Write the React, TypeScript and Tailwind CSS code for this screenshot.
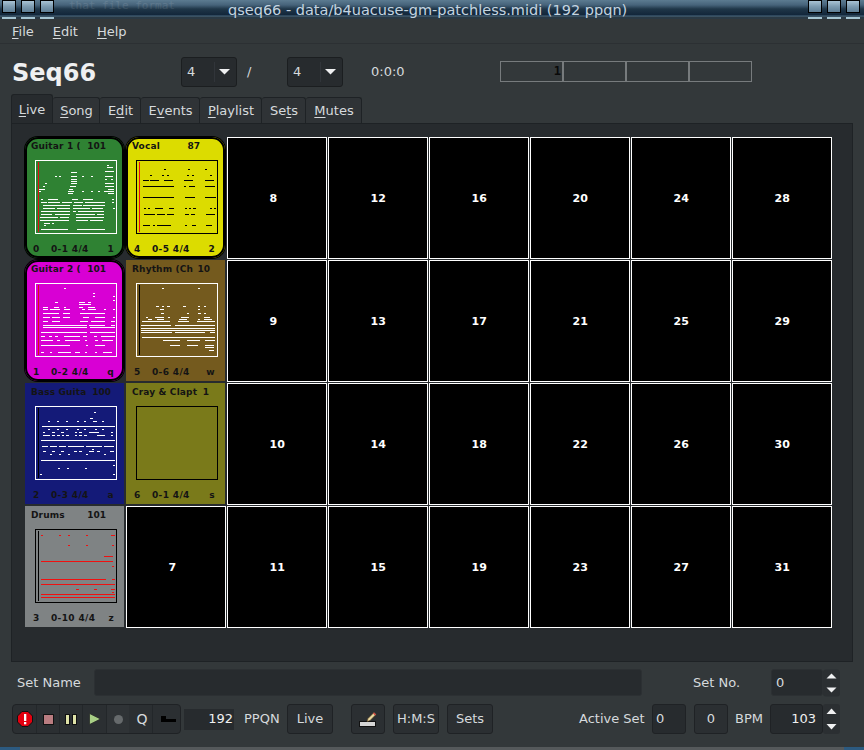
import React from "react";

const UI = "font-['DejaVu_Sans',sans-serif]";

type Row = number[];

// note rows: [y, x1, x2, x1, x2, ...] measured in 3x picture units
const guitar1: Row[] = [
  [106, 276, 282], [112, 276, 294], [124, 270, 297], [127, 169, 187], [139, 121, 127, 133, 139, 169, 187, 202, 208, 229, 235, 270, 294],
  [148, 169, 187, 270, 276, 288, 294], [154, 169, 187], [160, 90, 96, 169, 187, 270, 297], [169, 84, 90, 166, 184, 270, 297],
  [178, 72, 90, 163, 175, 280, 297], [184, 72, 78, 160, 178, 202, 208, 229, 235, 250, 256, 268, 297], [190, 160, 175, 280, 297],
  [208, 78, 84, 100, 130, 170, 190, 205, 235, 292, 298], [217, 78, 96, 100, 135, 140, 170, 178, 205, 210, 270, 292, 298],
  [226, 84, 165, 175, 200, 205, 270], [235, 84, 120, 126, 165, 175, 225, 232, 265, 295, 300], [244, 78, 165, 175, 182, 190, 268], [253, 78, 110, 120, 165, 184, 240, 246, 268],
  [262, 75, 130, 136, 162, 184, 268], [271, 75, 162, 184, 220, 226, 265], [280, 87, 105, 111, 117], [286, 87, 93], [298, 78, 160, 187, 270],
];
const vocal: Row[] = [
  [118, 447, 453, 519, 525, 570, 576], [136, 405, 411, 441, 447, 456, 462, 516, 522, 531, 537, 585, 591],
  [151, 384, 402, 405, 432, 447, 474, 507, 534, 570, 597], [169, 384, 477, 507, 513, 522, 540, 570, 600],
  [202, 384, 477, 510, 540, 570, 603], [235, 387, 393, 399, 405, 420, 444, 462, 477, 510, 516, 522, 528, 534, 543, 585, 591, 597, 603],
  [253, 387, 420, 426, 450, 456, 477, 510, 522, 528, 540, 573, 600], [286, 384, 405, 414, 420, 426, 468, 510, 516, 531, 543, 573, 591],
];
const guitar2: Row[] = [
  [475, 147, 153], [490, 234, 240], [498, 234, 240, 294, 300], [510, 294, 300], [516, 120, 129, 192, 210, 219, 228], [522, 192, 228],
  [531, 84, 99, 117, 132, 147, 153, 192, 204, 219, 240], [537, 84, 99, 105, 135, 147, 165, 201, 210, 219, 243, 267, 273, 294, 300],
  [549, 84, 132, 144, 165, 195, 270], [561, 84, 105, 111, 135, 144, 165, 204, 222, 240, 270, 294, 300],
  [573, 84, 100, 111, 135, 195, 220, 228, 270, 288, 300], [585, 84, 216, 222, 270, 288, 300], [591, 84, 216, 225, 300],
  [606, 78, 216, 225, 300], [618, 78, 90, 102, 112, 120, 130, 147, 195, 205, 215, 236, 246, 258, 300],
  [630, 78, 114, 125, 135, 150, 195, 210, 215, 240, 250, 260, 295], [645, 78, 165, 212, 218, 240, 270],
  [666, 78, 87, 105, 111, 129, 168, 180, 195, 210, 216, 240, 246, 264, 291],
];
const rhythm: Row[] = [
  [475, 441, 447, 549, 555], [528, 423, 432, 441, 447, 456, 465, 504, 513, 549, 555, 567, 573], [537, 435, 447, 549, 555],
  [549, 438, 447, 516, 522, 549, 558, 567, 573], [561, 393, 399, 420, 447, 459, 465, 498, 522, 567, 585],
  [567, 399, 411, 426, 447, 492, 516, 549, 555, 567, 591], [573, 381, 465, 489, 522, 546, 600], [585, 378, 468, 480, 600],
  [594, 378, 600], [600, 378, 600], [606, 378, 471, 480, 570, 585, 600], [621, 381, 600], [630, 444, 495, 516, 555, 570, 600],
  [645, 465, 495, 516, 550, 570, 597], [651, 570, 597], [660, 582, 597],
];
const bass: Row[] = [
  [97, 237, 243], [115, 225, 234], [124, 99, 105, 126, 132, 153, 159, 186, 192, 207, 213, 234, 246, 261, 267], [139, 81, 300],
  [148, 99, 105, 126, 132, 153, 159, 186, 192, 207, 213, 240, 246, 261, 267], [157, 84, 90, 111, 120, 138, 147, 180, 186, 192, 201, 222, 252, 288, 294],
  [166, 84, 105, 111, 120, 126, 135, 141, 147, 153, 162, 180, 186, 192, 201, 207, 216, 246, 270, 288, 294], [181, 78, 300],
  [199, 81, 99, 105, 126, 132, 153, 159, 207, 213, 261, 267, 297], [208, 231, 237],
  [214, 84, 93, 111, 120, 138, 147, 177, 186, 192, 201, 222, 237, 246, 255, 285, 297], [223, 105, 111, 132, 138, 159, 165, 213, 219, 267, 273],
  [241, 78, 300], [256, 294, 300], [265, 129, 135, 156, 162, 210, 216], [283, 75, 81, 294, 300],
];
const drums: Row[] = [
  [466, 78, 84, 132, 138, 159, 165, 213, 219, 288, 300], [496, 159, 165, 213, 219, 291, 297], [529, 267, 294], [530, 267, 294], [544, 78, 294],
  [559, 291, 297], [598, 78, 273, 291, 300], [613, 78, 300], [628, 183, 192, 237, 246, 288, 300], [637, 291, 297], [643, 78, 300], [652, 78, 300],
];

function PatternBox({ ox, oy, rows, frame, note, line }: { ox: number; oy: number; rows: Row[]; frame: string; note: string; line?: string }) {
  return (
    <svg width="82" height="74" viewBox={`${ox} ${oy} 246 222`} shapeRendering="crispEdges" className="ml-[10px] block">
      <rect x={ox + 1.5} y={oy + 1.5} width="243" height="219" fill="none" stroke={frame} strokeWidth="3" />
      {line && <rect x={ox + 9} y={oy + 6} width="3" height="210" fill={line} />}
      {rows.flatMap((r, i) => {
        const out = [];
        for (let k = 1; k < r.length; k += 2) {
          out.push(<rect key={`${i}-${k}`} x={r[k]} y={r[0] - 1} width={r[k + 1] - r[k]} height="3" fill={note} />);
        }
        return out;
      })}
    </svg>
  );
}

function PatternCell({ name, count, nameW, no, pat, hotkey, bg, armed, children }: {
  name: string; count: string; nameW: number; no: string; pat: string; hotkey: string; bg: string; armed?: boolean; children: React.ReactNode;
}) {
  return (
    <div
      className={`w-[99px] h-[121px] flex flex-col font-['DejaVu_Sans',sans-serif] font-bold text-[9px] leading-[11px] text-[#141414] ${bg} ${armed ? "rounded-[13px] shadow-[0_0_0_1px_#000,inset_0_0_0_2px_#000]" : ""}`}
    >
      <div className="h-[23px] pl-[6px] pt-[4px]">
        <div className="flex justify-between whitespace-pre" style={{ width: nameW }}>
          <span className="tracking-[0.15px]">{name}</span>
          <span>{count}</span>
        </div>
      </div>
      {children}
      <div className="flex mt-[10px] pl-[8px] pr-[10px] tracking-[0.35px]">
        <span className="w-[18px]">{no}</span>
        <span>{pat}</span>
        <span className="ml-auto">{hotkey}</span>
      </div>
    </div>
  );
}

function EmptyCell({ n }: { n: number }) {
  return (
    <div className="w-[100px] h-[122px] bg-black border border-white flex items-center justify-center pt-[2px] font-['DejaVu_Sans',sans-serif] font-bold text-[11px] text-white">
      <span className="w-[15px] whitespace-nowrap">{n}</span>
    </div>
  );
}

function Combo({ value, className }: { value: string; className: string }) {
  return (
    <div className={`w-[56px] h-[30px] bg-[#272b2e] border border-[#1b1e20] rounded-[3px] flex items-center ${className}`}>
      <span className="pl-[5px] flex-1 text-[13px]">{value}</span>
      <div className="w-[1px] h-[20px] bg-[#31353a]" />
      <svg width="21" height="8" viewBox="0 0 21 8">
        <path d="M4 1h11l-5.500 5.500z" fill="#eff0f1" />
      </svg>
    </div>
  );
}

function Btn({ children, className }: { children: React.ReactNode; className: string }) {
  return (
    <div className={`h-[30px] bg-[#2b2f32] border border-[#1f2225] rounded-[3px] flex items-center justify-center text-[13px] text-[#d6dadd] ${className}`}>
      {children}
    </div>
  );
}

// transport buttons share one rounded frame, with a hairline between them
function ToolBtn({ children, className }: { children: React.ReactNode; className: string }) {
  return (
    <div className={`h-full border-r border-[#23272a] flex items-center justify-center ${className}`}>
      {children}
    </div>
  );
}

function Arrows() {
  return (
    <div className="w-[17px] h-[30px] bg-[#2b2f32] rounded-[3px] flex flex-col items-center justify-around">
      <svg width="11" height="7" viewBox="0 0 11 7"><path d="M5.500 0.5l5 5.500h-10z" fill="#eff0f1" /></svg>
      <svg width="11" height="7" viewBox="0 0 11 7"><path d="M0.5 1h10l-5 5.500z" fill="#eff0f1" /></svg>
    </div>
  );
}

const tabs = [
  { pre: "", u: "S", post: "ong", w: "w-[47px]" },
  { pre: "E", u: "d", post: "it", w: "w-[41px]" },
  { pre: "E", u: "v", post: "ents", w: "w-[59px]" },
  { pre: "", u: "P", post: "laylist", w: "w-[62px]" },
  { pre: "Se", u: "t", post: "s", w: "w-[44px]" },
  { pre: "", u: "M", post: "utes", w: "w-[56px]" },
];

function WinButton() {
  return (
    <div className="flex flex-col gap-[4px]">
      <div className="w-[14px] h-[13px] border border-black bg-gradient-to-b from-[#a9c3d4] via-[#7d9bb0] to-[#5f7f96]" />
      <div className="w-[14px] h-[2px] bg-[#a4c4d2]" />
    </div>
  );
}

export default function App() {
  return (
    <div className={`${UI} w-[864px] h-[750px] bg-[#33383a] text-[#d6dadd] overflow-hidden flex flex-col`}>
      {/* window title */}
      <div className="relative h-[19px] shrink-0 bg-[linear-gradient(#5c7b91_0,#46637a_5px,#1f3648_9px,#12263a_15px,#4b6a80_16px,#2a3944_17px,#2a3944_19px)] overflow-hidden flex justify-between px-[2px]">
        <div className="flex gap-[5px]">
          <WinButton />
          <WinButton />
          <WinButton />
        </div>
        <span className="absolute left-[69px] top-0 font-['DejaVu_Sans_Mono',monospace] text-[11px] leading-[12px] text-white/10 whitespace-pre">that file format</span>
        <span className="absolute left-[228px] top-[1px] text-[14.5px] leading-[18px] text-[#c4d4e0] whitespace-pre">qseq66 - data/b4uacuse-gm-patchless.midi (192 ppqn)</span>
        <div className="flex gap-[5px] pr-[2px]">
          <WinButton />
          <WinButton />
          <WinButton />
        </div>
      </div>

      {/* menu */}
      <div className="h-[25px] shrink-0 border-b border-[#2c3033] flex items-center gap-[19px] pl-[12px] text-[13px] pt-[1px]">
        <span><u className="underline-offset-2">F</u>ile</span>
        <span><u className="underline-offset-2">E</u>dit</span>
        <span><u className="underline-offset-2">H</u>elp</span>
      </div>

      {/* seq66 header row */}
      <div className="h-[50px] shrink-0 flex items-center pl-[12px]">
        <span className="w-[169px] text-[24px] font-bold text-[#eff0f1] mt-[8px]">Seq66</span>
        <Combo value="4" className="mt-[6px]" />
        <span className="w-[50px] pl-[10px] text-[13px] mt-[6px]">/</span>
        <Combo value="4" className="mt-[6px]" />
        <span className="ml-[28px] w-[129px] text-[13px] mt-[6px]">0:0:0</span>
        <div className="flex mt-[4px]">
          <div className="w-[63px] h-[21px] border border-[#777b7d] flex items-center justify-end pr-[1px] font-['DejaVu_Sans_Mono',monospace] font-bold text-[12px] text-[#0a0a0a]">1</div>
          <div className="w-[63px] h-[21px] border border-[#777b7d]" />
          <div className="w-[63px] h-[21px] border border-[#777b7d]" />
          <div className="w-[63px] h-[21px] border border-[#777b7d]" />
        </div>
      </div>

      {/* tabs */}
      <div className="h-[29px] shrink-0 pl-[11px] flex items-end text-[13px]">
        <div className="w-[42px] h-[29px] bg-[#272b2e] border border-b-0 border-[#1e2225] rounded-t-[3px] flex items-center justify-center pt-[1px]">
          <span><u className="underline-offset-2">L</u>ive</span>
        </div>
        {tabs.map((t) => (
          <div key={t.post} className={`${t.w} h-[26px] bg-[#2f3336] border border-b-0 border-l-0 border-[#1e2225] rounded-t-[3px] flex items-center justify-center pl-[1px]`}>
            <span>{t.pre}<u className="underline-offset-2">{t.u}</u>{t.post}</span>
          </div>
        ))}
      </div>

      {/* live grid panel */}
      <div className="mx-[11px] h-[539px] shrink-0 bg-[#272b2e] border border-[#1e2225] pl-[13px] pt-[13px]">
        <div className="grid grid-cols-[repeat(8,101px)] auto-rows-[123px]">
          <PatternCell name="Guitar 1 (" count="101" nameW={75} no="0" pat="0-1 4/4" hotkey="1" bg="bg-[#2f8233]" armed>
            <PatternBox ox={60} oy={90} rows={guitar1} frame="#fff" note="#fff" line="#e01010" />
          </PatternCell>
          <PatternCell name="Vocal" count="87" nameW={68} no="4" pat="0-5 4/4" hotkey="2" bg="bg-[#dcdc00]" armed>
            <PatternBox ox={363} oy={90} rows={vocal} frame="#000" note="#000" line="#f01010" />
          </PatternCell>
          <EmptyCell n={8} />
          <EmptyCell n={12} />
          <EmptyCell n={16} />
          <EmptyCell n={20} />
          <EmptyCell n={24} />
          <EmptyCell n={28} />

          <PatternCell name="Guitar 2 (" count="101" nameW={75} no="1" pat="0-2 4/4" hotkey="q" bg="bg-[#d800d4]" armed>
            <PatternBox ox={60} oy={459} rows={guitar2} frame="#fff" note="#fff" line="#e01010" />
          </PatternCell>
          <PatternCell name="Rhythm (Ch" count="10" nameW={78} no="5" pat="0-6 4/4" hotkey="w" bg="bg-[#745a1e]">
            <PatternBox ox={363} oy={459} rows={rhythm} frame="#fff" note="#fff" line="#000" />
          </PatternCell>
          <EmptyCell n={9} />
          <EmptyCell n={13} />
          <EmptyCell n={17} />
          <EmptyCell n={21} />
          <EmptyCell n={25} />
          <EmptyCell n={29} />

          <PatternCell name="Bass Guita" count="100" nameW={80} no="2" pat="0-3 4/4" hotkey="a" bg="bg-[#141a78]">
            <PatternBox ox={60} oy={78} rows={bass} frame="#fff" note="#fff" line="#000" />
          </PatternCell>
          <PatternCell name="Cray & Clapt" count="1" nameW={77} no="6" pat="0-1 4/4" hotkey="s" bg="bg-[#7a7a1a]">
            <PatternBox ox={363} oy={78} rows={[]} frame="#000" note="#000" />
          </PatternCell>
          <EmptyCell n={10} />
          <EmptyCell n={14} />
          <EmptyCell n={18} />
          <EmptyCell n={22} />
          <EmptyCell n={26} />
          <EmptyCell n={30} />

          <PatternCell name="Drums" count="101" nameW={75} no="3" pat="0-10 4/4" hotkey="z" bg="bg-[#7f8384]">
            <PatternBox ox={60} oy={447} rows={drums} frame="#000" note="#f01010" line="#000" />
          </PatternCell>
          <EmptyCell n={7} />
          <EmptyCell n={11} />
          <EmptyCell n={15} />
          <EmptyCell n={19} />
          <EmptyCell n={23} />
          <EmptyCell n={27} />
          <EmptyCell n={31} />
        </div>
      </div>

      {/* set name row */}
      <div className="h-[27px] mt-[7px] shrink-0 flex items-center text-[13px]">
        <span className="w-[94px] pl-[17px]">Set Name</span>
        <div className="w-[548px] h-[27px] bg-[#272b2e] border border-[#2c3033] rounded-[3px]" />
        <span className="w-[78px] pl-[51px] whitespace-nowrap">Set No.</span>
        <div className="ml-[51px] w-[52px] h-[27px] bg-[#272b2e] border border-[#2c3033] rounded-[3px] flex items-center pl-[4px]">0</div>
        <div className="scale-y-90"><Arrows /></div>
      </div>

      {/* transport row */}
      <div className="h-[30px] mt-[8px] shrink-0 pl-[12px] flex items-center text-[13px]">
        <div className="h-[30px] flex bg-[#2b2f32] border border-[#1f2225] rounded-[4px] overflow-hidden">
          <ToolBtn className="w-[24px]">
            <svg width="16" height="16" viewBox="0 0 16 16">
              <path d="M5 .5h6L15.500 5v6L11 15.500H5L.5 11V5z" fill="#e3000f" stroke="#111" />
              <rect x="7" y="3" width="2.300" height="7" fill="#fff" />
              <rect x="7" y="11" width="2.300" height="2.300" fill="#fff" />
            </svg>
          </ToolBtn>
          <ToolBtn className="w-[23px]">
            <svg width="11" height="11" viewBox="0 0 11 11"><rect x=".5" y=".5" width="10" height="10" fill="#b97c80" stroke="#111" /></svg>
          </ToolBtn>
          <ToolBtn className="w-[23px]">
            <svg width="12" height="11" viewBox="0 0 12 11">
              <rect x=".5" y=".5" width="4" height="10" fill="#dfe3a8" stroke="#111" />
              <rect x="7.500" y=".5" width="4" height="10" fill="#dfe3a8" stroke="#111" />
            </svg>
          </ToolBtn>
          <ToolBtn className="w-[24px]">
            <svg width="12" height="12" viewBox="0 0 12 12"><path d="M.5.5l11 5.500-11 5.500z" fill="#a8cf86" stroke="#222" strokeWidth=".7" /></svg>
          </ToolBtn>
          <div className="w-[22px] h-full bg-[#2f3336] flex items-center justify-center">
            <div className="w-[9px] h-[9px] rounded-full bg-[#666a6c]" />
          </div>
          <ToolBtn className="w-[24px] text-[14px] pl-[3px]">Q</ToolBtn>
          <div className="w-[27px] h-full flex items-center justify-center pl-[3px]">
            <svg width="15" height="7" viewBox="0 0 15 7"><path d="M0 0h5v3h10v3H0z" fill="#000" /></svg>
          </div>
        </div>
        <div className="ml-[3px] w-[50px] h-[21px] bg-[#272b2e] flex items-center justify-end pr-[1px] text-[#eff0f1]">192</div>
        <span className="ml-[10px] w-[43px]">PPQN</span>
        <Btn className="w-[46px]">Live</Btn>
        <Btn className="ml-[18px] w-[34px]">
          <svg width="18" height="15" viewBox="0 0 18 15">
            <rect x=".5" y="9.500" width="16" height="5" fill="#d6d6d6" stroke="#111" />
            <path d="M8 9.500l1-3L15 .5l2 2-6 6z" fill="#e9d9a0" stroke="#5a4020" strokeWidth=".6" />
            <path d="M15 .5l2 2-1 1-2-2z" fill="#d04040" />
          </svg>
        </Btn>
        <Btn className="ml-[8px] w-[46px]">H:M:S</Btn>
        <Btn className="ml-[8px] w-[46px]">Sets</Btn>
        <span className="ml-[86px] w-[73px] whitespace-nowrap">Active Set</span>
        <div className="w-[34px] h-[30px] bg-[#272b2e] border border-[#1f2225] rounded-[3px] flex items-center pl-[3px]">0</div>
        <Btn className="ml-[8px] w-[34px]">0</Btn>
        <span className="ml-[7px] w-[35px] pb-[1px]">BPM</span>
        <div className="w-[53px] h-[30px] bg-[#272b2e] border border-[#1f2225] rounded-[3px] flex items-center justify-end pr-[6px] text-[#eff0f1]">103</div>
        <Arrows />
      </div>

      {/* window bottom edge */}
      <div className="mt-[13px] h-[3px] shrink-0 bg-[#55595b] flex justify-between">
        <div className="w-[20px] bg-[#2c5a80]" />
        <div className="w-[20px] bg-[#2c5a80]" />
      </div>
    </div>
  );
}
